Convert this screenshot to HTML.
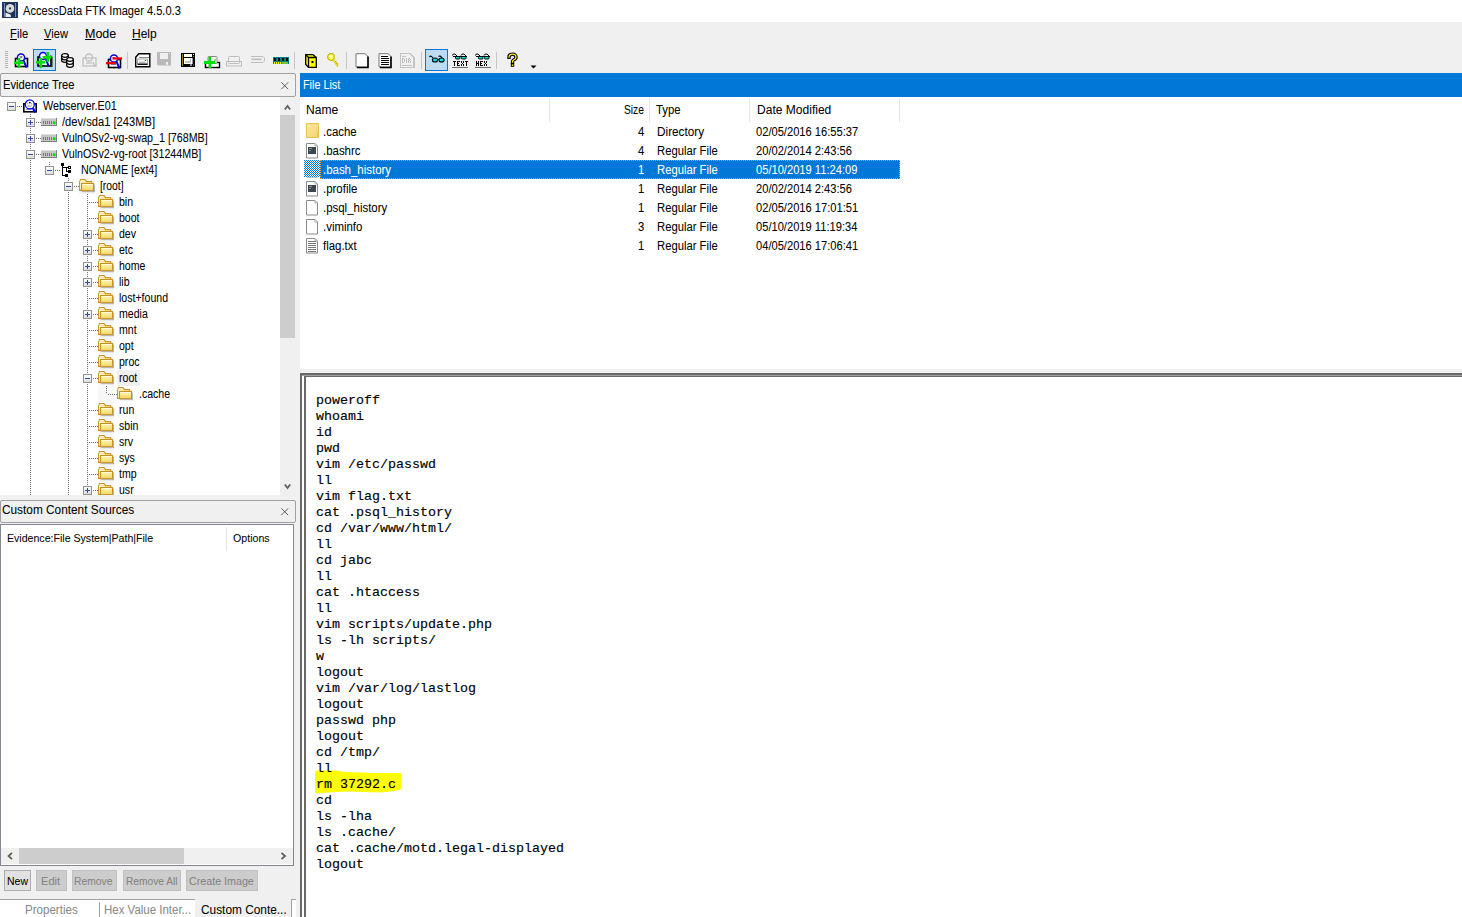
<!DOCTYPE html><html><head><meta charset="utf-8"><style>
*{margin:0;padding:0;box-sizing:border-box}
html,body{width:1462px;height:917px;overflow:hidden;background:#f0f0f0;font-family:"Liberation Sans",sans-serif;font-size:12px;color:#000;position:relative}
.a{position:absolute}
.t{position:absolute;white-space:pre;-webkit-text-stroke:0.05px currentColor}
.u{text-decoration:underline;text-underline-offset:1px}
svg{position:absolute;overflow:visible}
.mono{position:absolute;white-space:pre;font-family:"Liberation Mono",monospace;font-size:13.333px;line-height:16px;color:#000;-webkit-text-stroke:0.15px #000}
</style></head><body>
<div class="a" style="left:0px;top:0px;width:1462px;height:22px;background:#fff"></div>
<svg style="left:2px;top:2px" width="16" height="16" viewBox="0 0 16 16">
<rect x="0" y="0" width="16" height="16" fill="#1c3563"/>
<rect x="2" y="1" width="1" height="14" fill="#7d8db0"/>
<rect x="13" y="1" width="1" height="14" fill="#7d8db0"/>
<rect x="3" y="1" width="10" height="14" fill="#1a2f5e"/>
<circle cx="8" cy="6.4" r="4.3" fill="#dadada"/>
<circle cx="8" cy="6.4" r="1.1" fill="#1a2f5e"/>
<path d="M3.5 10.5 L8.5 12.5 L9 15 L3.5 15 Z" fill="#eeeeee"/>
</svg>
<div class="t" style="left:23.00px;top:2.67px;font-size:12.5px;line-height:16px;color:#000;transform:scaleX(0.8876);transform-origin:0 0;">AccessData FTK Imager 4.5.0.3</div>
<div class="t" style="left:10.00px;top:25.67px;font-size:12.5px;line-height:16px;color:#000;transform:scaleX(0.9000);transform-origin:0 0;"><span class="u">F</span>ile</div>
<div class="t" style="left:44.00px;top:25.67px;font-size:12.5px;line-height:16px;color:#000;transform:scaleX(0.8929);transform-origin:0 0;"><span class="u">V</span>iew</div>
<div class="t" style="left:85.00px;top:25.67px;font-size:12.5px;line-height:16px;color:#000;transform:scaleX(1.0000);transform-origin:0 0;"><span class="u">M</span>ode</div>
<div class="t" style="left:132.00px;top:25.67px;font-size:12.5px;line-height:16px;color:#000;transform:scaleX(0.9615);transform-origin:0 0;"><span class="u">H</span>elp</div>
<svg style="left:0;top:0" width="560" height="76" viewBox="0 0 560 76"><rect x="5" y="51" width="3" height="1" fill="#b4b4b4"/><rect x="5" y="53" width="3" height="1" fill="#b4b4b4"/><rect x="5" y="55" width="3" height="1" fill="#b4b4b4"/><rect x="5" y="57" width="3" height="1" fill="#b4b4b4"/><rect x="5" y="59" width="3" height="1" fill="#b4b4b4"/><rect x="5" y="61" width="3" height="1" fill="#b4b4b4"/><rect x="5" y="63" width="3" height="1" fill="#b4b4b4"/><rect x="5" y="65" width="3" height="1" fill="#b4b4b4"/><rect x="5" y="67" width="3" height="1" fill="#b4b4b4"/><rect x="33.5" y="49.5" width="22" height="21" fill="#bcdcf4" stroke="#0078d7" stroke-width="1"/><rect x="425.5" y="49.5" width="22" height="21" fill="#bcdcf4" stroke="#0078d7" stroke-width="1"/><rect x="127" y="52" width="1" height="17" fill="#c6c6c6"/><rect x="294" y="52" width="1" height="17" fill="#c6c6c6"/><rect x="346" y="52" width="1" height="17" fill="#c6c6c6"/><rect x="421" y="52" width="1" height="17" fill="#c6c6c6"/><rect x="496" y="52" width="1" height="17" fill="#c6c6c6"/><g transform="translate(14,52)"><rect x="1.5" y="6.5" width="12" height="8" fill="#fff" stroke="#000" stroke-width="1.6"/><rect x="4" y="11" width="5" height="1" fill="#888"/><circle cx="7" cy="5.5" r="3.6" fill="#fff" stroke="#0000e0" stroke-width="1.5"/><ellipse cx="7" cy="5" rx="1.5" ry="1" fill="#777"/><path d="M9.5 8.5 L12.5 15.5" stroke="#0000e0" stroke-width="2"/><rect x="0" y="9.5" width="10" height="2.6" fill="#00e000"/><rect x="3.7" y="6" width="2.6" height="10" fill="#00e000"/></g><g transform="translate(36,52)"><path d="M3 15 L17 15 L17 5 L15 3 L14 3 L14 15" fill="#7a7a7a"/><rect x="2" y="5" width="13" height="9" fill="#f3f3f3" stroke="#000" stroke-width="1.6"/><circle cx="7" cy="4" r="3.5" fill="#fff" stroke="#0000e0" stroke-width="1.5"/><path d="M10 7 L12.5 14" stroke="#0000e0" stroke-width="2"/><rect x="0" y="9" width="9" height="2.6" fill="#00e000"/><rect x="3.5" y="6" width="2.6" height="10" fill="#00e000"/><rect x="6.5" y="4" width="9" height="2.6" fill="#00e000"/><rect x="10.5" y="0" width="2.6" height="10" fill="#00e000"/></g><g transform="translate(61,53)" fill="#fff" stroke="#000" stroke-width="1.3"><path d="M0.7 2.5 v5 a3.3 1.8 0 0 0 6.6 0 v-5"/><ellipse cx="4" cy="2.5" rx="3.3" ry="1.8"/><path d="M0.7 5 a3.3 1.8 0 0 0 6.6 0" fill="none"/><path d="M5.7 6.5 v6 a3.3 1.8 0 0 0 6.6 0 v-6"/><ellipse cx="9" cy="6.5" rx="3.3" ry="1.8"/><path d="M5.7 9.5 a3.3 1.8 0 0 0 6.6 0" fill="none"/></g><g transform="translate(82,53)" fill="none" stroke="#c0c0c0" stroke-width="1.3"><rect x="1" y="5" width="13" height="8"/><circle cx="7" cy="4.5" r="3.5"/><path d="M4 10 h6"/><path d="M11 9 L13 14"/></g><g transform="translate(107,53)"><rect x="1.5" y="6.5" width="12" height="8" fill="#fff" stroke="#000" stroke-width="1.6"/><rect x="4" y="11" width="5" height="1" fill="#888"/><circle cx="7" cy="5.5" r="3.6" fill="#fff" stroke="#0000e0" stroke-width="1.5"/><ellipse cx="7" cy="5" rx="1.5" ry="1" fill="#777"/><path d="M9.5 8.5 L12.5 15.5" stroke="#0000e0" stroke-width="2"/><rect x="-1" y="9" width="10" height="2.3" fill="#f00000"/><rect x="5.5" y="4.3" width="9.5" height="2.3" fill="#f00000"/></g><g transform="translate(135,53)"><path d="M0.7 4.3 L3.8 0.7 L14.8 0.7 L14.8 13.8 L0.7 13.8 Z" fill="#fff" stroke="#000" stroke-width="1.4"/><path d="M4 4.5 H14" stroke="#8a8a8a" stroke-width="1"/><path d="M2.5 6 h10 v5 h-10 z" fill="#fff" stroke="#9a9a9a" stroke-width="0.9"/><rect x="2.5" y="10.6" width="10.2" height="1.3" fill="#000"/><rect x="4" y="8.7" width="6.5" height="0.9" fill="#8a8a8a"/><circle cx="10.5" cy="7.4" r="0.7" fill="#008000"/></g><g transform="translate(157,52)"><path d="M0 0 H14 V13.6 H1 L0 12.6 Z" fill="#b9b9b9"/><rect x="3" y="1" width="8" height="6" fill="#f0f0f0"/><rect x="9" y="10" width="2" height="2.7" fill="#f0f0f0"/><rect x="12" y="1" width="1" height="1" fill="#f0f0f0"/></g><g transform="translate(181,53)"><rect x="0" y="0" width="14" height="14" fill="#000"/><rect x="1" y="1" width="1" height="12" fill="#9a8a00"/><rect x="3" y="1" width="8" height="3" fill="#fff"/><rect x="3" y="5" width="9" height="6" fill="#fff"/><rect x="4" y="8.5" width="6" height="1" fill="#888"/><rect x="11" y="5" width="1" height="6" fill="#999"/><circle cx="9.5" cy="7" r="0.6" fill="#080"/><rect x="9" y="11.5" width="2" height="1" fill="#fff"/><rect x="12" y="1" width="1" height="1" fill="#fff"/><rect x="12" y="3" width="1" height="1" fill="#9a8a00"/><rect x="12" y="11.5" width="1" height="1" fill="#9a8a00"/></g><g transform="translate(204,55)"><rect x="1.5" y="7.5" width="14" height="5" fill="#fff" stroke="#000" stroke-width="1.4"/><rect x="4" y="1.5" width="9" height="7" rx="0.8" fill="#fff" stroke="#888" stroke-width="1"/><circle cx="11" cy="5" r="0.7" fill="#080"/><rect x="0" y="6" width="11" height="3" fill="#00e000"/><rect x="4.5" y="2" width="2.5" height="11" fill="#00e000"/></g><g transform="translate(226,56)" fill="none" stroke="#bdbdbd" stroke-width="1"><rect x="0.5" y="5.5" width="15" height="4.5"/><rect x="2.5" y="0.5" width="11" height="7" rx="1"/><path d="M4 5.5 h6"/></g><g transform="translate(250,56)" fill="none" stroke="#bdbdbd" stroke-width="1"><path d="M1 0.5 h12 l1.5 1.5 v3 l-1.5 1.5 h-12"/><rect x="1.5" y="2.5" width="10" height="1.6" fill="#bdbdbd" stroke="none"/></g><g transform="translate(273,57)"><rect x="0" y="0" width="16" height="7" fill="#008080"/><rect x="1" y="1" width="2" height="3" fill="#000"/><rect x="5" y="1" width="2" height="3" fill="#000"/><rect x="9" y="1" width="2" height="3" fill="#000"/><rect x="13" y="1" width="2" height="3" fill="#000"/><path d="M1.5 5v2M3.5 5v2M5.5 5v2M7.5 5v2M10 5v2M12 5v2M14 5v2" stroke="#ffff00" stroke-width="1"/></g><g transform="translate(305,54)"><path d="M0.7 0.7 L8 0.7 L11.3 3.5 L11.3 13.3 L3.5 13.3 L0.7 10.5 Z" fill="#ffff00" stroke="#000" stroke-width="1.3"/><path d="M0.7 0.7 L3.5 3.5 L11.3 3.5 M3.5 3.5 L3.5 13.3" fill="none" stroke="#000" stroke-width="1.3"/><rect x="6.5" y="7" width="2" height="2" fill="#000"/></g><g transform="translate(327,53)"><circle cx="4" cy="4" r="3.3" fill="#ffff60" stroke="#c8b400" stroke-width="1.2"/><circle cx="3.5" cy="3.3" r="1" fill="#fff"/><path d="M6 6.5 L11 13.5 M8 9.5 L9.5 8.5 M9.5 11.5 L11 10.5" stroke="#c8b400" stroke-width="1.6"/><path d="M6 6.5 L11 13.5" stroke="#ffff40" stroke-width="0.8"/></g><g transform="translate(355,53)"><path d="M1 0.7 L10 0.7 L13 3.5 L13 14 L1 14 Z" fill="#fff" stroke="#777" stroke-width="1"/><path d="M13 3.5 V14.5 H2" fill="none" stroke="#000" stroke-width="1.6"/></g><g transform="translate(378,53)"><path d="M1 0.7 L10 0.7 L13 3.5 L13 14 L1 14 Z" fill="#fff" stroke="#777" stroke-width="1"/><path d="M13 3.5 V14.5 H2" fill="none" stroke="#000" stroke-width="1.6"/><path d="M3 3.5h7M3 5.5h8M3 7.5h8M3 9.5h8M3 11.5h8" stroke="#000" stroke-width="1"/></g><g transform="translate(400,53)" shape-rendering="crispEdges"><path d="M0.5 0.5 H10 L13.5 4 V14.5 H0.5 Z" fill="none" stroke="#c4c4c4" stroke-width="1"/><rect x="14" y="4" width="1" height="11" fill="#c4c4c4"/><rect x="2" y="3" width="4" height="1" fill="#c4c4c4"/><rect x="2" y="12" width="10" height="1" fill="#c4c4c4"/><rect x="2" y="5" width="1" height="1" fill="#c0c0c0"/><rect x="3" y="5" width="1" height="1" fill="#c0c0c0"/><rect x="2" y="6" width="1" height="1" fill="#c0c0c0"/><rect x="4" y="6" width="1" height="1" fill="#c0c0c0"/><rect x="2" y="7" width="1" height="1" fill="#c0c0c0"/><rect x="4" y="7" width="1" height="1" fill="#c0c0c0"/><rect x="2" y="8" width="1" height="1" fill="#c0c0c0"/><rect x="4" y="8" width="1" height="1" fill="#c0c0c0"/><rect x="2" y="9" width="1" height="1" fill="#c0c0c0"/><rect x="3" y="9" width="1" height="1" fill="#c0c0c0"/><rect x="6" y="5" width="1" height="1" fill="#c0c0c0"/><rect x="6" y="6" width="1" height="1" fill="#c0c0c0"/><rect x="6" y="7" width="1" height="1" fill="#c0c0c0"/><rect x="6" y="8" width="1" height="1" fill="#c0c0c0"/><rect x="6" y="9" width="1" height="1" fill="#c0c0c0"/><rect x="8" y="5" width="1" height="1" fill="#c0c0c0"/><rect x="9" y="5" width="1" height="1" fill="#c0c0c0"/><rect x="8" y="6" width="1" height="1" fill="#c0c0c0"/><rect x="10" y="6" width="1" height="1" fill="#c0c0c0"/><rect x="8" y="7" width="1" height="1" fill="#c0c0c0"/><rect x="9" y="7" width="1" height="1" fill="#c0c0c0"/><rect x="8" y="8" width="1" height="1" fill="#c0c0c0"/><rect x="10" y="8" width="1" height="1" fill="#c0c0c0"/><rect x="8" y="9" width="1" height="1" fill="#c0c0c0"/><rect x="10" y="9" width="1" height="1" fill="#c0c0c0"/></g><g transform="translate(429,55)"><path d="M0.5 2 Q2 0 4 3" fill="none" stroke="#000" stroke-width="1.2"/><path d="M9.5 1.5 Q11 0 13 3" fill="none" stroke="#000" stroke-width="1.2"/><ellipse cx="6" cy="5" rx="2.6" ry="2" fill="#00e0e0" stroke="#000" stroke-width="1.1"/><ellipse cx="12.5" cy="5" rx="2.6" ry="2" fill="#00e0e0" stroke="#000" stroke-width="1.1"/><path d="M8.4 4.5 h1.8" stroke="#000" stroke-width="1.2"/></g><g transform="translate(452,53)"><path d="M0.5 2.5 Q0.5 0.5 3 1 L5 3" fill="none" stroke="#000" stroke-width="1"/><path d="M9 2.5 Q9.5 0.5 12 1 L14 3" fill="none" stroke="#000" stroke-width="1"/><rect x="3.5" y="3.5" width="4.5" height="2.5" rx="1" fill="#00e0e0" stroke="#000" stroke-width="1"/><rect x="9.5" y="3.5" width="4.5" height="2.5" rx="1" fill="#00e0e0" stroke="#000" stroke-width="1"/><path d="M1 3.5 h14" stroke="#000" stroke-width="1"/><g shape-rendering="crispEdges"><rect x="1" y="8" width="1" height="1" fill="#000"/><rect x="2" y="8" width="1" height="1" fill="#000"/><rect x="3" y="8" width="1" height="1" fill="#000"/><rect x="2" y="9" width="1" height="1" fill="#000"/><rect x="2" y="10" width="1" height="1" fill="#000"/><rect x="2" y="11" width="1" height="1" fill="#000"/><rect x="2" y="12" width="1" height="1" fill="#000"/><rect x="5" y="8" width="1" height="1" fill="#000"/><rect x="6" y="8" width="1" height="1" fill="#000"/><rect x="7" y="8" width="1" height="1" fill="#000"/><rect x="5" y="9" width="1" height="1" fill="#000"/><rect x="5" y="10" width="1" height="1" fill="#000"/><rect x="6" y="10" width="1" height="1" fill="#000"/><rect x="5" y="11" width="1" height="1" fill="#000"/><rect x="5" y="12" width="1" height="1" fill="#000"/><rect x="6" y="12" width="1" height="1" fill="#000"/><rect x="7" y="12" width="1" height="1" fill="#000"/><rect x="9" y="8" width="1" height="1" fill="#000"/><rect x="11" y="8" width="1" height="1" fill="#000"/><rect x="9" y="9" width="1" height="1" fill="#000"/><rect x="11" y="9" width="1" height="1" fill="#000"/><rect x="10" y="10" width="1" height="1" fill="#000"/><rect x="9" y="11" width="1" height="1" fill="#000"/><rect x="11" y="11" width="1" height="1" fill="#000"/><rect x="9" y="12" width="1" height="1" fill="#000"/><rect x="11" y="12" width="1" height="1" fill="#000"/><rect x="13" y="8" width="1" height="1" fill="#000"/><rect x="14" y="8" width="1" height="1" fill="#000"/><rect x="15" y="8" width="1" height="1" fill="#000"/><rect x="14" y="9" width="1" height="1" fill="#000"/><rect x="14" y="10" width="1" height="1" fill="#000"/><rect x="14" y="11" width="1" height="1" fill="#000"/><rect x="14" y="12" width="1" height="1" fill="#000"/></g><rect x="0" y="14" width="16" height="1" fill="#6a6a6a"/></g><g transform="translate(475,53)"><path d="M0.5 2.5 Q0.5 0.5 3 1 L5 3" fill="none" stroke="#000" stroke-width="1"/><path d="M9 2.5 Q9.5 0.5 12 1 L14 3" fill="none" stroke="#000" stroke-width="1"/><rect x="3.5" y="3.5" width="4.5" height="2.5" rx="1" fill="#00e0e0" stroke="#000" stroke-width="1"/><rect x="9.5" y="3.5" width="4.5" height="2.5" rx="1" fill="#00e0e0" stroke="#000" stroke-width="1"/><path d="M1 3.5 h14" stroke="#000" stroke-width="1"/><g shape-rendering="crispEdges"><rect x="1" y="8" width="1" height="1" fill="#000"/><rect x="3" y="8" width="1" height="1" fill="#000"/><rect x="1" y="9" width="1" height="1" fill="#000"/><rect x="3" y="9" width="1" height="1" fill="#000"/><rect x="1" y="10" width="1" height="1" fill="#000"/><rect x="2" y="10" width="1" height="1" fill="#000"/><rect x="3" y="10" width="1" height="1" fill="#000"/><rect x="1" y="11" width="1" height="1" fill="#000"/><rect x="3" y="11" width="1" height="1" fill="#000"/><rect x="1" y="12" width="1" height="1" fill="#000"/><rect x="3" y="12" width="1" height="1" fill="#000"/><rect x="5" y="8" width="1" height="1" fill="#000"/><rect x="6" y="8" width="1" height="1" fill="#000"/><rect x="7" y="8" width="1" height="1" fill="#000"/><rect x="5" y="9" width="1" height="1" fill="#000"/><rect x="5" y="10" width="1" height="1" fill="#000"/><rect x="6" y="10" width="1" height="1" fill="#000"/><rect x="5" y="11" width="1" height="1" fill="#000"/><rect x="5" y="12" width="1" height="1" fill="#000"/><rect x="6" y="12" width="1" height="1" fill="#000"/><rect x="7" y="12" width="1" height="1" fill="#000"/><rect x="9" y="8" width="1" height="1" fill="#000"/><rect x="11" y="8" width="1" height="1" fill="#000"/><rect x="9" y="9" width="1" height="1" fill="#000"/><rect x="11" y="9" width="1" height="1" fill="#000"/><rect x="10" y="10" width="1" height="1" fill="#000"/><rect x="9" y="11" width="1" height="1" fill="#000"/><rect x="11" y="11" width="1" height="1" fill="#000"/><rect x="9" y="12" width="1" height="1" fill="#000"/><rect x="11" y="12" width="1" height="1" fill="#000"/></g><rect x="0" y="14" width="16" height="1" fill="#6a6a6a"/></g><g transform="translate(507,53)" fill="none" stroke-linecap="square"><path d="M2 4.2 Q2 1.2 5.5 1.2 Q9 1.2 9 4.2 Q9 6 6.5 7 Q5.5 7.5 5.5 9.2" stroke="#000" stroke-width="3.4"/><path d="M2 4.2 Q2 1.2 5.5 1.2 Q9 1.2 9 4.2 Q9 6 6.5 7 Q5.5 7.5 5.5 9.2" stroke="#ffff00" stroke-width="1.3"/><rect x="3.8" y="10.6" width="3.4" height="3.2" fill="#000" stroke="none"/><rect x="4.8" y="11.4" width="1.5" height="1.5" fill="#ffff00" stroke="none"/></g><path d="M530.5 65.5 h6 l-3 3 z" fill="#000"/></svg>
<div class="a" style="left:0px;top:73px;width:296px;height:24px;border:1px solid #a0a0a0;border-radius:2px;background:#f0f0f0"></div>
<div class="t" style="left:2.50px;top:76.67px;font-size:12.5px;line-height:16px;color:#000;transform:scaleX(0.8950);transform-origin:0 0;">Evidence Tree</div>
<svg style="left:281px;top:82px" width="8" height="8" viewBox="0 0 8 8"><path d="M0.3 0.3 L7.2 7.2 M7.2 0.3 L0.3 7.2" stroke="#505050" stroke-width="0.9"/></svg>
<div class="a" style="left:0;top:97px;width:280px;height:398px;background:#fff;overflow:hidden"><svg style="left:0;top:-97px" width="280" height="495" viewBox="0 0 280 495" shape-rendering="crispEdges"><defs><linearGradient id="fg" x1="0" y1="0" x2="0" y2="1"><stop offset="0" stop-color="#fff6c0"/><stop offset="1" stop-color="#f6d55a"/></linearGradient><linearGradient id="eg" x1="0" y1="0" x2="0" y2="1"><stop offset="0" stop-color="#ffffff"/><stop offset="1" stop-color="#dcdcdc"/></linearGradient></defs><rect x="98" y="194" width="16" height="301" fill="#f7f7f7"/><rect x="79" y="178" width="16" height="16" fill="#f5f5f5"/><path d="M30.5 114 V495" stroke="#6d6d6d" stroke-width="1" stroke-dasharray="1 1"/><path d="M49.5 162 V166" stroke="#6d6d6d" stroke-width="1" stroke-dasharray="1 1"/><path d="M68.5 178 V182" stroke="#6d6d6d" stroke-width="1" stroke-dasharray="1 1"/><path d="M68.5 190 V495" stroke="#6d6d6d" stroke-width="1" stroke-dasharray="1 1"/><path d="M87.5 194 V495" stroke="#6d6d6d" stroke-width="1" stroke-dasharray="1 1"/><path d="M106.5 386 V394" stroke="#6d6d6d" stroke-width="1" stroke-dasharray="1 1"/><rect x="17" y="106" width="1" height="1" fill="#6d6d6d"/><rect x="19" y="106" width="1" height="1" fill="#6d6d6d"/><rect x="21" y="106" width="1" height="1" fill="#6d6d6d"/><rect x="36" y="122" width="1" height="1" fill="#6d6d6d"/><rect x="38" y="122" width="1" height="1" fill="#6d6d6d"/><rect x="40" y="122" width="1" height="1" fill="#6d6d6d"/><rect x="36" y="138" width="1" height="1" fill="#6d6d6d"/><rect x="38" y="138" width="1" height="1" fill="#6d6d6d"/><rect x="40" y="138" width="1" height="1" fill="#6d6d6d"/><rect x="36" y="154" width="1" height="1" fill="#6d6d6d"/><rect x="38" y="154" width="1" height="1" fill="#6d6d6d"/><rect x="40" y="154" width="1" height="1" fill="#6d6d6d"/><rect x="55" y="170" width="1" height="1" fill="#6d6d6d"/><rect x="57" y="170" width="1" height="1" fill="#6d6d6d"/><rect x="59" y="170" width="1" height="1" fill="#6d6d6d"/><rect x="74" y="186" width="1" height="1" fill="#6d6d6d"/><rect x="76" y="186" width="1" height="1" fill="#6d6d6d"/><rect x="78" y="186" width="1" height="1" fill="#6d6d6d"/><rect x="89" y="202" width="1" height="1" fill="#6d6d6d"/><rect x="91" y="202" width="1" height="1" fill="#6d6d6d"/><rect x="93" y="202" width="1" height="1" fill="#6d6d6d"/><rect x="95" y="202" width="1" height="1" fill="#6d6d6d"/><rect x="97" y="202" width="1" height="1" fill="#6d6d6d"/><rect x="89" y="218" width="1" height="1" fill="#6d6d6d"/><rect x="91" y="218" width="1" height="1" fill="#6d6d6d"/><rect x="93" y="218" width="1" height="1" fill="#6d6d6d"/><rect x="95" y="218" width="1" height="1" fill="#6d6d6d"/><rect x="97" y="218" width="1" height="1" fill="#6d6d6d"/><rect x="93" y="234" width="1" height="1" fill="#6d6d6d"/><rect x="95" y="234" width="1" height="1" fill="#6d6d6d"/><rect x="97" y="234" width="1" height="1" fill="#6d6d6d"/><rect x="93" y="250" width="1" height="1" fill="#6d6d6d"/><rect x="95" y="250" width="1" height="1" fill="#6d6d6d"/><rect x="97" y="250" width="1" height="1" fill="#6d6d6d"/><rect x="93" y="266" width="1" height="1" fill="#6d6d6d"/><rect x="95" y="266" width="1" height="1" fill="#6d6d6d"/><rect x="97" y="266" width="1" height="1" fill="#6d6d6d"/><rect x="93" y="282" width="1" height="1" fill="#6d6d6d"/><rect x="95" y="282" width="1" height="1" fill="#6d6d6d"/><rect x="97" y="282" width="1" height="1" fill="#6d6d6d"/><rect x="89" y="298" width="1" height="1" fill="#6d6d6d"/><rect x="91" y="298" width="1" height="1" fill="#6d6d6d"/><rect x="93" y="298" width="1" height="1" fill="#6d6d6d"/><rect x="95" y="298" width="1" height="1" fill="#6d6d6d"/><rect x="97" y="298" width="1" height="1" fill="#6d6d6d"/><rect x="93" y="314" width="1" height="1" fill="#6d6d6d"/><rect x="95" y="314" width="1" height="1" fill="#6d6d6d"/><rect x="97" y="314" width="1" height="1" fill="#6d6d6d"/><rect x="89" y="330" width="1" height="1" fill="#6d6d6d"/><rect x="91" y="330" width="1" height="1" fill="#6d6d6d"/><rect x="93" y="330" width="1" height="1" fill="#6d6d6d"/><rect x="95" y="330" width="1" height="1" fill="#6d6d6d"/><rect x="97" y="330" width="1" height="1" fill="#6d6d6d"/><rect x="89" y="346" width="1" height="1" fill="#6d6d6d"/><rect x="91" y="346" width="1" height="1" fill="#6d6d6d"/><rect x="93" y="346" width="1" height="1" fill="#6d6d6d"/><rect x="95" y="346" width="1" height="1" fill="#6d6d6d"/><rect x="97" y="346" width="1" height="1" fill="#6d6d6d"/><rect x="89" y="362" width="1" height="1" fill="#6d6d6d"/><rect x="91" y="362" width="1" height="1" fill="#6d6d6d"/><rect x="93" y="362" width="1" height="1" fill="#6d6d6d"/><rect x="95" y="362" width="1" height="1" fill="#6d6d6d"/><rect x="97" y="362" width="1" height="1" fill="#6d6d6d"/><rect x="93" y="378" width="1" height="1" fill="#6d6d6d"/><rect x="95" y="378" width="1" height="1" fill="#6d6d6d"/><rect x="97" y="378" width="1" height="1" fill="#6d6d6d"/><rect x="108" y="394" width="1" height="1" fill="#6d6d6d"/><rect x="110" y="394" width="1" height="1" fill="#6d6d6d"/><rect x="112" y="394" width="1" height="1" fill="#6d6d6d"/><rect x="114" y="394" width="1" height="1" fill="#6d6d6d"/><rect x="116" y="394" width="1" height="1" fill="#6d6d6d"/><rect x="89" y="410" width="1" height="1" fill="#6d6d6d"/><rect x="91" y="410" width="1" height="1" fill="#6d6d6d"/><rect x="93" y="410" width="1" height="1" fill="#6d6d6d"/><rect x="95" y="410" width="1" height="1" fill="#6d6d6d"/><rect x="97" y="410" width="1" height="1" fill="#6d6d6d"/><rect x="89" y="426" width="1" height="1" fill="#6d6d6d"/><rect x="91" y="426" width="1" height="1" fill="#6d6d6d"/><rect x="93" y="426" width="1" height="1" fill="#6d6d6d"/><rect x="95" y="426" width="1" height="1" fill="#6d6d6d"/><rect x="97" y="426" width="1" height="1" fill="#6d6d6d"/><rect x="89" y="442" width="1" height="1" fill="#6d6d6d"/><rect x="91" y="442" width="1" height="1" fill="#6d6d6d"/><rect x="93" y="442" width="1" height="1" fill="#6d6d6d"/><rect x="95" y="442" width="1" height="1" fill="#6d6d6d"/><rect x="97" y="442" width="1" height="1" fill="#6d6d6d"/><rect x="89" y="458" width="1" height="1" fill="#6d6d6d"/><rect x="91" y="458" width="1" height="1" fill="#6d6d6d"/><rect x="93" y="458" width="1" height="1" fill="#6d6d6d"/><rect x="95" y="458" width="1" height="1" fill="#6d6d6d"/><rect x="97" y="458" width="1" height="1" fill="#6d6d6d"/><rect x="89" y="474" width="1" height="1" fill="#6d6d6d"/><rect x="91" y="474" width="1" height="1" fill="#6d6d6d"/><rect x="93" y="474" width="1" height="1" fill="#6d6d6d"/><rect x="95" y="474" width="1" height="1" fill="#6d6d6d"/><rect x="97" y="474" width="1" height="1" fill="#6d6d6d"/><rect x="93" y="490" width="1" height="1" fill="#6d6d6d"/><rect x="95" y="490" width="1" height="1" fill="#6d6d6d"/><rect x="97" y="490" width="1" height="1" fill="#6d6d6d"/><rect x="7.5" y="102.5" width="8" height="8" rx="1" fill="url(#eg)" stroke="#929292" stroke-width="1"/><rect x="9" y="106" width="5" height="1" fill="#2b4ea0"/><rect x="26.5" y="118.5" width="8" height="8" rx="1" fill="url(#eg)" stroke="#929292" stroke-width="1"/><rect x="28" y="122" width="5" height="1" fill="#2b4ea0"/><rect x="30" y="120" width="1" height="5" fill="#2b4ea0"/><rect x="26.5" y="134.5" width="8" height="8" rx="1" fill="url(#eg)" stroke="#929292" stroke-width="1"/><rect x="28" y="138" width="5" height="1" fill="#2b4ea0"/><rect x="30" y="136" width="1" height="5" fill="#2b4ea0"/><rect x="26.5" y="150.5" width="8" height="8" rx="1" fill="url(#eg)" stroke="#929292" stroke-width="1"/><rect x="28" y="154" width="5" height="1" fill="#2b4ea0"/><rect x="45.5" y="166.5" width="8" height="8" rx="1" fill="url(#eg)" stroke="#929292" stroke-width="1"/><rect x="47" y="170" width="5" height="1" fill="#2b4ea0"/><rect x="64.5" y="182.5" width="8" height="8" rx="1" fill="url(#eg)" stroke="#929292" stroke-width="1"/><rect x="66" y="186" width="5" height="1" fill="#2b4ea0"/><rect x="83.5" y="230.5" width="8" height="8" rx="1" fill="url(#eg)" stroke="#929292" stroke-width="1"/><rect x="85" y="234" width="5" height="1" fill="#2b4ea0"/><rect x="87" y="232" width="1" height="5" fill="#2b4ea0"/><rect x="83.5" y="246.5" width="8" height="8" rx="1" fill="url(#eg)" stroke="#929292" stroke-width="1"/><rect x="85" y="250" width="5" height="1" fill="#2b4ea0"/><rect x="87" y="248" width="1" height="5" fill="#2b4ea0"/><rect x="83.5" y="262.5" width="8" height="8" rx="1" fill="url(#eg)" stroke="#929292" stroke-width="1"/><rect x="85" y="266" width="5" height="1" fill="#2b4ea0"/><rect x="87" y="264" width="1" height="5" fill="#2b4ea0"/><rect x="83.5" y="278.5" width="8" height="8" rx="1" fill="url(#eg)" stroke="#929292" stroke-width="1"/><rect x="85" y="282" width="5" height="1" fill="#2b4ea0"/><rect x="87" y="280" width="1" height="5" fill="#2b4ea0"/><rect x="83.5" y="310.5" width="8" height="8" rx="1" fill="url(#eg)" stroke="#929292" stroke-width="1"/><rect x="85" y="314" width="5" height="1" fill="#2b4ea0"/><rect x="87" y="312" width="1" height="5" fill="#2b4ea0"/><rect x="83.5" y="374.5" width="8" height="8" rx="1" fill="url(#eg)" stroke="#929292" stroke-width="1"/><rect x="85" y="378" width="5" height="1" fill="#2b4ea0"/><rect x="83.5" y="486.5" width="8" height="8" rx="1" fill="url(#eg)" stroke="#929292" stroke-width="1"/><rect x="85" y="490" width="5" height="1" fill="#2b4ea0"/><rect x="87" y="488" width="1" height="5" fill="#2b4ea0"/></svg><svg style="left:0;top:-97px" width="280" height="495" viewBox="0 0 280 495"><g transform="translate(23,97)"><rect x="0.8" y="6.8" width="12.4" height="8" fill="#fff" stroke="#000" stroke-width="1.6"/><rect x="2.5" y="12" width="6" height="0.9" fill="#999"/><circle cx="6.8" cy="7.4" r="4.5" fill="#fff" stroke="#0000ee" stroke-width="1.3"/><circle cx="6.8" cy="5.6" r="0.9" fill="#000"/><path d="M4 6.8 h1 M8 6.8 h1 M4.5 9 h4" stroke="#777" stroke-width="0.9"/><path d="M9.8 11 L12.3 15.5" stroke="#0000ee" stroke-width="2.3"/></g><g transform="translate(41,118)"><rect x="0" y="0" width="16" height="8" fill="#c4c4c4"/><rect x="0" y="0" width="16" height="1" fill="#dedede"/><rect x="0" y="7" width="16" height="1" fill="#808080"/><rect x="15" y="0" width="1" height="8" fill="#808080"/><path d="M2.5 3v3M4.5 3v3M6.5 3v3M8.5 3v3M10.5 3v3" stroke="#7a7a7a" stroke-width="1"/><rect x="12" y="3.5" width="2.5" height="2.5" fill="#00e000"/></g><g transform="translate(41,134)"><rect x="0" y="0" width="16" height="8" fill="#c4c4c4"/><rect x="0" y="0" width="16" height="1" fill="#dedede"/><rect x="0" y="7" width="16" height="1" fill="#808080"/><rect x="15" y="0" width="1" height="8" fill="#808080"/><path d="M2.5 3v3M4.5 3v3M6.5 3v3M8.5 3v3M10.5 3v3" stroke="#7a7a7a" stroke-width="1"/><rect x="12" y="3.5" width="2.5" height="2.5" fill="#00e000"/></g><g transform="translate(41,150)"><rect x="0" y="0" width="16" height="8" fill="#c4c4c4"/><rect x="0" y="0" width="16" height="1" fill="#dedede"/><rect x="0" y="7" width="16" height="1" fill="#808080"/><rect x="15" y="0" width="1" height="8" fill="#808080"/><path d="M2.5 3v3M4.5 3v3M6.5 3v3M8.5 3v3M10.5 3v3" stroke="#7a7a7a" stroke-width="1"/><rect x="12" y="3.5" width="2.5" height="2.5" fill="#00e000"/></g><g fill="#000" shape-rendering="crispEdges"><rect x="61" y="163" width="3" height="3"/><rect x="62" y="166" width="1" height="10"/><rect x="62" y="167" width="6" height="1"/><rect x="68" y="166" width="3" height="3"/><rect x="69" y="167" width="1" height="1" fill="#fff"/><rect x="66" y="167" width="1" height="5"/><rect x="66" y="171" width="2" height="1"/><rect x="68" y="170" width="3" height="3"/><rect x="62" y="175" width="3" height="1"/><rect x="65" y="174" width="3" height="3"/></g><g transform="translate(79,179)"><path d="M0.6 3 L1.6 0.6 H6 L7.5 2.6 H12.4 L13 4 V11.4 H0.6 Z" fill="#fff3a0" stroke="#c8922a" stroke-width="1.1"/><path d="M1.6 1.6 H5.6 M1.6 2.2 V10" stroke="#ffffff" stroke-width="0.8" opacity="0.8"/><rect x="2.5" y="4.5" width="12" height="7.2" fill="url(#fg)" stroke="#c8922a" stroke-width="1.1"/><path d="M3.4 5.5 H13.6" stroke="#fffde0" stroke-width="0.9"/><rect x="15" y="5.5" width="1" height="7" fill="#6a6a70" opacity="0.45"/><rect x="3" y="12.2" width="13" height="1" fill="#6a6a70" opacity="0.45"/></g><g transform="translate(98,195)"><path d="M0.6 3 L1.6 0.6 H6 L7.5 2.6 H12.4 L13 4 V11.4 H0.6 Z" fill="#fff3a0" stroke="#c8922a" stroke-width="1.1"/><path d="M1.6 1.6 H5.6 M1.6 2.2 V10" stroke="#ffffff" stroke-width="0.8" opacity="0.8"/><rect x="2.5" y="4.5" width="12" height="7.2" fill="url(#fg)" stroke="#c8922a" stroke-width="1.1"/><path d="M3.4 5.5 H13.6" stroke="#fffde0" stroke-width="0.9"/><rect x="15" y="5.5" width="1" height="7" fill="#6a6a70" opacity="0.45"/><rect x="3" y="12.2" width="13" height="1" fill="#6a6a70" opacity="0.45"/></g><g transform="translate(98,211)"><path d="M0.6 3 L1.6 0.6 H6 L7.5 2.6 H12.4 L13 4 V11.4 H0.6 Z" fill="#fff3a0" stroke="#c8922a" stroke-width="1.1"/><path d="M1.6 1.6 H5.6 M1.6 2.2 V10" stroke="#ffffff" stroke-width="0.8" opacity="0.8"/><rect x="2.5" y="4.5" width="12" height="7.2" fill="url(#fg)" stroke="#c8922a" stroke-width="1.1"/><path d="M3.4 5.5 H13.6" stroke="#fffde0" stroke-width="0.9"/><rect x="15" y="5.5" width="1" height="7" fill="#6a6a70" opacity="0.45"/><rect x="3" y="12.2" width="13" height="1" fill="#6a6a70" opacity="0.45"/></g><g transform="translate(98,227)"><path d="M0.6 3 L1.6 0.6 H6 L7.5 2.6 H12.4 L13 4 V11.4 H0.6 Z" fill="#fff3a0" stroke="#c8922a" stroke-width="1.1"/><path d="M1.6 1.6 H5.6 M1.6 2.2 V10" stroke="#ffffff" stroke-width="0.8" opacity="0.8"/><rect x="2.5" y="4.5" width="12" height="7.2" fill="url(#fg)" stroke="#c8922a" stroke-width="1.1"/><path d="M3.4 5.5 H13.6" stroke="#fffde0" stroke-width="0.9"/><rect x="15" y="5.5" width="1" height="7" fill="#6a6a70" opacity="0.45"/><rect x="3" y="12.2" width="13" height="1" fill="#6a6a70" opacity="0.45"/></g><g transform="translate(98,243)"><path d="M0.6 3 L1.6 0.6 H6 L7.5 2.6 H12.4 L13 4 V11.4 H0.6 Z" fill="#fff3a0" stroke="#c8922a" stroke-width="1.1"/><path d="M1.6 1.6 H5.6 M1.6 2.2 V10" stroke="#ffffff" stroke-width="0.8" opacity="0.8"/><rect x="2.5" y="4.5" width="12" height="7.2" fill="url(#fg)" stroke="#c8922a" stroke-width="1.1"/><path d="M3.4 5.5 H13.6" stroke="#fffde0" stroke-width="0.9"/><rect x="15" y="5.5" width="1" height="7" fill="#6a6a70" opacity="0.45"/><rect x="3" y="12.2" width="13" height="1" fill="#6a6a70" opacity="0.45"/></g><g transform="translate(98,259)"><path d="M0.6 3 L1.6 0.6 H6 L7.5 2.6 H12.4 L13 4 V11.4 H0.6 Z" fill="#fff3a0" stroke="#c8922a" stroke-width="1.1"/><path d="M1.6 1.6 H5.6 M1.6 2.2 V10" stroke="#ffffff" stroke-width="0.8" opacity="0.8"/><rect x="2.5" y="4.5" width="12" height="7.2" fill="url(#fg)" stroke="#c8922a" stroke-width="1.1"/><path d="M3.4 5.5 H13.6" stroke="#fffde0" stroke-width="0.9"/><rect x="15" y="5.5" width="1" height="7" fill="#6a6a70" opacity="0.45"/><rect x="3" y="12.2" width="13" height="1" fill="#6a6a70" opacity="0.45"/></g><g transform="translate(98,275)"><path d="M0.6 3 L1.6 0.6 H6 L7.5 2.6 H12.4 L13 4 V11.4 H0.6 Z" fill="#fff3a0" stroke="#c8922a" stroke-width="1.1"/><path d="M1.6 1.6 H5.6 M1.6 2.2 V10" stroke="#ffffff" stroke-width="0.8" opacity="0.8"/><rect x="2.5" y="4.5" width="12" height="7.2" fill="url(#fg)" stroke="#c8922a" stroke-width="1.1"/><path d="M3.4 5.5 H13.6" stroke="#fffde0" stroke-width="0.9"/><rect x="15" y="5.5" width="1" height="7" fill="#6a6a70" opacity="0.45"/><rect x="3" y="12.2" width="13" height="1" fill="#6a6a70" opacity="0.45"/></g><g transform="translate(98,291)"><path d="M0.6 3 L1.6 0.6 H6 L7.5 2.6 H12.4 L13 4 V11.4 H0.6 Z" fill="#fff3a0" stroke="#c8922a" stroke-width="1.1"/><path d="M1.6 1.6 H5.6 M1.6 2.2 V10" stroke="#ffffff" stroke-width="0.8" opacity="0.8"/><rect x="2.5" y="4.5" width="12" height="7.2" fill="url(#fg)" stroke="#c8922a" stroke-width="1.1"/><path d="M3.4 5.5 H13.6" stroke="#fffde0" stroke-width="0.9"/><rect x="15" y="5.5" width="1" height="7" fill="#6a6a70" opacity="0.45"/><rect x="3" y="12.2" width="13" height="1" fill="#6a6a70" opacity="0.45"/></g><g transform="translate(98,307)"><path d="M0.6 3 L1.6 0.6 H6 L7.5 2.6 H12.4 L13 4 V11.4 H0.6 Z" fill="#fff3a0" stroke="#c8922a" stroke-width="1.1"/><path d="M1.6 1.6 H5.6 M1.6 2.2 V10" stroke="#ffffff" stroke-width="0.8" opacity="0.8"/><rect x="2.5" y="4.5" width="12" height="7.2" fill="url(#fg)" stroke="#c8922a" stroke-width="1.1"/><path d="M3.4 5.5 H13.6" stroke="#fffde0" stroke-width="0.9"/><rect x="15" y="5.5" width="1" height="7" fill="#6a6a70" opacity="0.45"/><rect x="3" y="12.2" width="13" height="1" fill="#6a6a70" opacity="0.45"/></g><g transform="translate(98,323)"><path d="M0.6 3 L1.6 0.6 H6 L7.5 2.6 H12.4 L13 4 V11.4 H0.6 Z" fill="#fff3a0" stroke="#c8922a" stroke-width="1.1"/><path d="M1.6 1.6 H5.6 M1.6 2.2 V10" stroke="#ffffff" stroke-width="0.8" opacity="0.8"/><rect x="2.5" y="4.5" width="12" height="7.2" fill="url(#fg)" stroke="#c8922a" stroke-width="1.1"/><path d="M3.4 5.5 H13.6" stroke="#fffde0" stroke-width="0.9"/><rect x="15" y="5.5" width="1" height="7" fill="#6a6a70" opacity="0.45"/><rect x="3" y="12.2" width="13" height="1" fill="#6a6a70" opacity="0.45"/></g><g transform="translate(98,339)"><path d="M0.6 3 L1.6 0.6 H6 L7.5 2.6 H12.4 L13 4 V11.4 H0.6 Z" fill="#fff3a0" stroke="#c8922a" stroke-width="1.1"/><path d="M1.6 1.6 H5.6 M1.6 2.2 V10" stroke="#ffffff" stroke-width="0.8" opacity="0.8"/><rect x="2.5" y="4.5" width="12" height="7.2" fill="url(#fg)" stroke="#c8922a" stroke-width="1.1"/><path d="M3.4 5.5 H13.6" stroke="#fffde0" stroke-width="0.9"/><rect x="15" y="5.5" width="1" height="7" fill="#6a6a70" opacity="0.45"/><rect x="3" y="12.2" width="13" height="1" fill="#6a6a70" opacity="0.45"/></g><g transform="translate(98,355)"><path d="M0.6 3 L1.6 0.6 H6 L7.5 2.6 H12.4 L13 4 V11.4 H0.6 Z" fill="#fff3a0" stroke="#c8922a" stroke-width="1.1"/><path d="M1.6 1.6 H5.6 M1.6 2.2 V10" stroke="#ffffff" stroke-width="0.8" opacity="0.8"/><rect x="2.5" y="4.5" width="12" height="7.2" fill="url(#fg)" stroke="#c8922a" stroke-width="1.1"/><path d="M3.4 5.5 H13.6" stroke="#fffde0" stroke-width="0.9"/><rect x="15" y="5.5" width="1" height="7" fill="#6a6a70" opacity="0.45"/><rect x="3" y="12.2" width="13" height="1" fill="#6a6a70" opacity="0.45"/></g><g transform="translate(98,371)"><path d="M0.6 3 L1.6 0.6 H6 L7.5 2.6 H12.4 L13 4 V11.4 H0.6 Z" fill="#fff3a0" stroke="#c8922a" stroke-width="1.1"/><path d="M1.6 1.6 H5.6 M1.6 2.2 V10" stroke="#ffffff" stroke-width="0.8" opacity="0.8"/><rect x="2.5" y="4.5" width="12" height="7.2" fill="url(#fg)" stroke="#c8922a" stroke-width="1.1"/><path d="M3.4 5.5 H13.6" stroke="#fffde0" stroke-width="0.9"/><rect x="15" y="5.5" width="1" height="7" fill="#6a6a70" opacity="0.45"/><rect x="3" y="12.2" width="13" height="1" fill="#6a6a70" opacity="0.45"/></g><g transform="translate(117,387)"><path d="M0.6 3 L1.6 0.6 H6 L7.5 2.6 H12.4 L13 4 V11.4 H0.6 Z" fill="#fff3a0" stroke="#c8922a" stroke-width="1.1"/><path d="M1.6 1.6 H5.6 M1.6 2.2 V10" stroke="#ffffff" stroke-width="0.8" opacity="0.8"/><rect x="2.5" y="4.5" width="12" height="7.2" fill="url(#fg)" stroke="#c8922a" stroke-width="1.1"/><path d="M3.4 5.5 H13.6" stroke="#fffde0" stroke-width="0.9"/><rect x="15" y="5.5" width="1" height="7" fill="#6a6a70" opacity="0.45"/><rect x="3" y="12.2" width="13" height="1" fill="#6a6a70" opacity="0.45"/></g><g transform="translate(98,403)"><path d="M0.6 3 L1.6 0.6 H6 L7.5 2.6 H12.4 L13 4 V11.4 H0.6 Z" fill="#fff3a0" stroke="#c8922a" stroke-width="1.1"/><path d="M1.6 1.6 H5.6 M1.6 2.2 V10" stroke="#ffffff" stroke-width="0.8" opacity="0.8"/><rect x="2.5" y="4.5" width="12" height="7.2" fill="url(#fg)" stroke="#c8922a" stroke-width="1.1"/><path d="M3.4 5.5 H13.6" stroke="#fffde0" stroke-width="0.9"/><rect x="15" y="5.5" width="1" height="7" fill="#6a6a70" opacity="0.45"/><rect x="3" y="12.2" width="13" height="1" fill="#6a6a70" opacity="0.45"/></g><g transform="translate(98,419)"><path d="M0.6 3 L1.6 0.6 H6 L7.5 2.6 H12.4 L13 4 V11.4 H0.6 Z" fill="#fff3a0" stroke="#c8922a" stroke-width="1.1"/><path d="M1.6 1.6 H5.6 M1.6 2.2 V10" stroke="#ffffff" stroke-width="0.8" opacity="0.8"/><rect x="2.5" y="4.5" width="12" height="7.2" fill="url(#fg)" stroke="#c8922a" stroke-width="1.1"/><path d="M3.4 5.5 H13.6" stroke="#fffde0" stroke-width="0.9"/><rect x="15" y="5.5" width="1" height="7" fill="#6a6a70" opacity="0.45"/><rect x="3" y="12.2" width="13" height="1" fill="#6a6a70" opacity="0.45"/></g><g transform="translate(98,435)"><path d="M0.6 3 L1.6 0.6 H6 L7.5 2.6 H12.4 L13 4 V11.4 H0.6 Z" fill="#fff3a0" stroke="#c8922a" stroke-width="1.1"/><path d="M1.6 1.6 H5.6 M1.6 2.2 V10" stroke="#ffffff" stroke-width="0.8" opacity="0.8"/><rect x="2.5" y="4.5" width="12" height="7.2" fill="url(#fg)" stroke="#c8922a" stroke-width="1.1"/><path d="M3.4 5.5 H13.6" stroke="#fffde0" stroke-width="0.9"/><rect x="15" y="5.5" width="1" height="7" fill="#6a6a70" opacity="0.45"/><rect x="3" y="12.2" width="13" height="1" fill="#6a6a70" opacity="0.45"/></g><g transform="translate(98,451)"><path d="M0.6 3 L1.6 0.6 H6 L7.5 2.6 H12.4 L13 4 V11.4 H0.6 Z" fill="#fff3a0" stroke="#c8922a" stroke-width="1.1"/><path d="M1.6 1.6 H5.6 M1.6 2.2 V10" stroke="#ffffff" stroke-width="0.8" opacity="0.8"/><rect x="2.5" y="4.5" width="12" height="7.2" fill="url(#fg)" stroke="#c8922a" stroke-width="1.1"/><path d="M3.4 5.5 H13.6" stroke="#fffde0" stroke-width="0.9"/><rect x="15" y="5.5" width="1" height="7" fill="#6a6a70" opacity="0.45"/><rect x="3" y="12.2" width="13" height="1" fill="#6a6a70" opacity="0.45"/></g><g transform="translate(98,467)"><path d="M0.6 3 L1.6 0.6 H6 L7.5 2.6 H12.4 L13 4 V11.4 H0.6 Z" fill="#fff3a0" stroke="#c8922a" stroke-width="1.1"/><path d="M1.6 1.6 H5.6 M1.6 2.2 V10" stroke="#ffffff" stroke-width="0.8" opacity="0.8"/><rect x="2.5" y="4.5" width="12" height="7.2" fill="url(#fg)" stroke="#c8922a" stroke-width="1.1"/><path d="M3.4 5.5 H13.6" stroke="#fffde0" stroke-width="0.9"/><rect x="15" y="5.5" width="1" height="7" fill="#6a6a70" opacity="0.45"/><rect x="3" y="12.2" width="13" height="1" fill="#6a6a70" opacity="0.45"/></g><g transform="translate(98,483)"><path d="M0.6 3 L1.6 0.6 H6 L7.5 2.6 H12.4 L13 4 V11.4 H0.6 Z" fill="#fff3a0" stroke="#c8922a" stroke-width="1.1"/><path d="M1.6 1.6 H5.6 M1.6 2.2 V10" stroke="#ffffff" stroke-width="0.8" opacity="0.8"/><rect x="2.5" y="4.5" width="12" height="7.2" fill="url(#fg)" stroke="#c8922a" stroke-width="1.1"/><path d="M3.4 5.5 H13.6" stroke="#fffde0" stroke-width="0.9"/><rect x="15" y="5.5" width="1" height="7" fill="#6a6a70" opacity="0.45"/><rect x="3" y="12.2" width="13" height="1" fill="#6a6a70" opacity="0.45"/></g></svg></div>
<div class="t" style="left:43.00px;top:97.84px;font-size:12px;line-height:16px;color:#000;transform:scaleX(0.9024);transform-origin:0 0;">Webserver.E01</div>
<div class="t" style="left:62.00px;top:113.84px;font-size:12px;line-height:16px;color:#000;transform:scaleX(0.9300);transform-origin:0 0;">/dev/sda1 [243MB]</div>
<div class="t" style="left:62.00px;top:129.84px;font-size:12px;line-height:16px;color:#000;transform:scaleX(0.8902);transform-origin:0 0;">VulnOSv2-vg-swap_1 [768MB]</div>
<div class="t" style="left:62.00px;top:145.84px;font-size:12px;line-height:16px;color:#000;transform:scaleX(0.8910);transform-origin:0 0;">VulnOSv2-vg-root [31244MB]</div>
<div class="t" style="left:81.00px;top:161.84px;font-size:12px;line-height:16px;color:#000;transform:scaleX(0.8941);transform-origin:0 0;">NONAME [ext4]</div>
<div class="t" style="left:100.20px;top:177.84px;font-size:12px;line-height:16px;color:#000;transform:scaleX(0.8593);transform-origin:0 0;">[root]</div>
<div class="t" style="left:118.70px;top:193.84px;font-size:12px;line-height:16px;color:#000;transform:scaleX(0.8800);transform-origin:0 0;">bin</div>
<div class="t" style="left:118.70px;top:209.84px;font-size:12px;line-height:16px;color:#000;transform:scaleX(0.8800);transform-origin:0 0;">boot</div>
<div class="t" style="left:118.70px;top:225.84px;font-size:12px;line-height:16px;color:#000;transform:scaleX(0.8800);transform-origin:0 0;">dev</div>
<div class="t" style="left:118.70px;top:241.84px;font-size:12px;line-height:16px;color:#000;transform:scaleX(0.8800);transform-origin:0 0;">etc</div>
<div class="t" style="left:118.70px;top:257.84px;font-size:12px;line-height:16px;color:#000;transform:scaleX(0.8800);transform-origin:0 0;">home</div>
<div class="t" style="left:118.70px;top:273.84px;font-size:12px;line-height:16px;color:#000;transform:scaleX(0.8800);transform-origin:0 0;">lib</div>
<div class="t" style="left:118.70px;top:289.84px;font-size:12px;line-height:16px;color:#000;transform:scaleX(0.8800);transform-origin:0 0;">lost+found</div>
<div class="t" style="left:118.70px;top:305.84px;font-size:12px;line-height:16px;color:#000;transform:scaleX(0.8800);transform-origin:0 0;">media</div>
<div class="t" style="left:118.70px;top:321.84px;font-size:12px;line-height:16px;color:#000;transform:scaleX(0.8800);transform-origin:0 0;">mnt</div>
<div class="t" style="left:118.70px;top:337.84px;font-size:12px;line-height:16px;color:#000;transform:scaleX(0.8800);transform-origin:0 0;">opt</div>
<div class="t" style="left:118.70px;top:353.84px;font-size:12px;line-height:16px;color:#000;transform:scaleX(0.8800);transform-origin:0 0;">proc</div>
<div class="a" style="left:117px;top:370px;width:23px;height:16px;background:#f0f0f0"></div>
<div class="t" style="left:118.70px;top:369.84px;font-size:12px;line-height:16px;color:#000;transform:scaleX(0.8800);transform-origin:0 0;">root</div>
<div class="t" style="left:138.50px;top:385.84px;font-size:12px;line-height:16px;color:#000;transform:scaleX(0.8800);transform-origin:0 0;">.cache</div>
<div class="t" style="left:118.70px;top:401.84px;font-size:12px;line-height:16px;color:#000;transform:scaleX(0.8800);transform-origin:0 0;">run</div>
<div class="t" style="left:118.70px;top:417.84px;font-size:12px;line-height:16px;color:#000;transform:scaleX(0.8800);transform-origin:0 0;">sbin</div>
<div class="t" style="left:118.70px;top:433.84px;font-size:12px;line-height:16px;color:#000;transform:scaleX(0.8800);transform-origin:0 0;">srv</div>
<div class="t" style="left:118.70px;top:449.84px;font-size:12px;line-height:16px;color:#000;transform:scaleX(0.8800);transform-origin:0 0;">sys</div>
<div class="t" style="left:118.70px;top:465.84px;font-size:12px;line-height:16px;color:#000;transform:scaleX(0.8800);transform-origin:0 0;">tmp</div>
<div class="t" style="left:118.70px;top:481.84px;font-size:12px;line-height:16px;color:#000;transform:scaleX(0.8800);transform-origin:0 0;">usr</div>
<div class="a" style="left:280px;top:97px;width:15px;height:398px;background:#f0f0f0"></div>
<div class="a" style="left:280px;top:115px;width:15px;height:223px;background:#cdcdcd"></div>
<svg style="left:284px;top:104px" width="8" height="7" viewBox="0 0 8 7"><path d="M0.8 5.5 L3.5 2 L6.2 5.5" fill="none" stroke="#606060" stroke-width="1.8"/></svg>
<svg style="left:284px;top:483px" width="8" height="7" viewBox="0 0 8 7"><path d="M0.8 1.5 L3.5 5 L6.2 1.5" fill="none" stroke="#606060" stroke-width="1.8"/></svg>
<div class="a" style="left:0px;top:500px;width:296px;height:23px;border:1px solid #a0a0a0;border-radius:2px;background:#f0f0f0"></div>
<div class="t" style="left:2.00px;top:501.77px;font-size:12.2px;line-height:16px;color:#000;transform:scaleX(0.9706);transform-origin:0 0;">Custom Content Sources</div>
<svg style="left:281px;top:508px" width="8" height="8" viewBox="0 0 8 8"><path d="M0.3 0.3 L7.2 7.2 M7.2 0.3 L0.3 7.2" stroke="#505050" stroke-width="0.9"/></svg>
<div class="a" style="left:0px;top:524px;width:294px;height:342px;border:1px solid #828790;background:#fff"></div>
<div class="t" style="left:7.00px;top:529.98px;font-size:11.6px;line-height:16px;color:#000;transform:scaleX(0.9130);transform-origin:0 0;">Evidence:File System|Path|File</div>
<div class="a" style="left:226px;top:527px;width:1px;height:24px;background:#e5e5e5"></div>
<div class="t" style="left:232.70px;top:529.98px;font-size:11.6px;line-height:16px;color:#000;transform:scaleX(0.9175);transform-origin:0 0;">Options</div>
<div class="a" style="left:1px;top:848px;width:292px;height:16px;background:#f0f0f0"></div>
<div class="a" style="left:19px;top:848px;width:165px;height:16px;background:#cdcdcd"></div>
<svg style="left:7px;top:852px" width="7" height="8" viewBox="0 0 7 8"><path d="M5 0.8 L1.5 4 L5 7.2" fill="none" stroke="#606060" stroke-width="1.8"/></svg>
<svg style="left:280px;top:852px" width="7" height="8" viewBox="0 0 7 8"><path d="M1.5 0.8 L5 4 L1.5 7.2" fill="none" stroke="#606060" stroke-width="1.8"/></svg>
<div class="a" style="left:4px;top:870px;width:27px;height:21px;background:#e1e1e1;border:1px solid #adadad"></div>
<div class="t" style="left:6.70px;top:873.12px;font-size:11.2px;line-height:16px;color:#000;transform:scaleX(0.9364);transform-origin:0 0;">New</div>
<div class="a" style="left:36px;top:870px;width:31px;height:21px;background:#cccccc;border:1px solid #bfbfbf"></div>
<div class="t" style="left:41.10px;top:873.12px;font-size:11.2px;line-height:16px;color:#838383;transform:scaleX(0.9947);transform-origin:0 0;">Edit</div>
<div class="a" style="left:72px;top:870px;width:45px;height:21px;background:#cccccc;border:1px solid #bfbfbf"></div>
<div class="t" style="left:74.30px;top:873.12px;font-size:11.2px;line-height:16px;color:#838383;transform:scaleX(0.9214);transform-origin:0 0;">Remove</div>
<div class="a" style="left:123px;top:870px;width:58px;height:21px;background:#cccccc;border:1px solid #bfbfbf"></div>
<div class="t" style="left:126.00px;top:873.12px;font-size:11.2px;line-height:16px;color:#838383;transform:scaleX(0.9123);transform-origin:0 0;">Remove All</div>
<div class="a" style="left:186px;top:870px;width:72px;height:21px;background:#cccccc;border:1px solid #bfbfbf"></div>
<div class="t" style="left:189.00px;top:873.12px;font-size:11.2px;line-height:16px;color:#838383;transform:scaleX(0.9559);transform-origin:0 0;">Create Image</div>
<div class="a" style="left:0px;top:899px;width:195px;height:18px;background:#fff;border-top:1px solid #a0a0a0"></div>
<div class="a" style="left:99px;top:902px;width:1px;height:15px;background:#a0a0a0"></div>
<div class="t" style="left:25.00px;top:901.84px;font-size:12px;line-height:16px;color:#8a8a8a;transform:scaleX(0.9636);transform-origin:0 0;">Properties</div>
<div class="t" style="left:104.00px;top:901.84px;font-size:12px;line-height:16px;color:#8a8a8a;transform:scaleX(0.9560);transform-origin:0 0;">Hex Value Inter...</div>
<div class="t" style="left:201.00px;top:901.84px;font-size:12px;line-height:16px;color:#000;transform:scaleX(0.9885);transform-origin:0 0;">Custom Conte...</div>
<div class="a" style="left:291px;top:899px;width:5px;height:18px;background:#fff;border-top:1px solid #a0a0a0;border-left:1px solid #a0a0a0"></div>
<div class="a" style="left:300px;top:73px;width:1162px;height:24px;background:#0078d7"></div>
<div class="t" style="left:302.80px;top:76.67px;font-size:12.5px;line-height:16px;color:#fff;transform:scaleX(0.8659);transform-origin:0 0;">File List</div>
<div class="a" style="left:300px;top:97px;width:1162px;height:272px;background:#fff"></div>
<div class="t" style="left:306.30px;top:101.67px;font-size:12.5px;line-height:16px;color:#000;transform:scaleX(0.9636);transform-origin:0 0;">Name</div>
<div class="t" style="left:624.30px;top:101.67px;font-size:12.5px;line-height:16px;color:#000;transform:scaleX(0.8208);transform-origin:0 0;">Size</div>
<div class="t" style="left:656.40px;top:101.67px;font-size:12.5px;line-height:16px;color:#000;transform:scaleX(0.9100);transform-origin:0 0;">Type</div>
<div class="t" style="left:756.50px;top:101.67px;font-size:12.5px;line-height:16px;color:#000;transform:scaleX(0.9636);transform-origin:0 0;">Date Modified</div>
<div class="a" style="left:549px;top:98px;width:1px;height:24px;background:#e5e5e5"></div>
<div class="a" style="left:649px;top:98px;width:1px;height:24px;background:#e5e5e5"></div>
<div class="a" style="left:749px;top:98px;width:1px;height:24px;background:#e5e5e5"></div>
<div class="a" style="left:899px;top:98px;width:1px;height:24px;background:#e5e5e5"></div>
<div class="t" style="left:322.50px;top:123.67px;font-size:12.5px;line-height:16px;color:#000;transform:scaleX(0.9150);transform-origin:0 0;">.cache</div>
<div class="t" style="left:637.70px;top:123.67px;font-size:12.5px;line-height:16px;color:#000;transform:scaleX(0.9000);transform-origin:0 0;">4</div>
<div class="t" style="left:656.60px;top:123.67px;font-size:12.5px;line-height:16px;color:#000;transform:scaleX(0.9430);transform-origin:0 0;">Directory</div>
<div class="t" style="left:756.30px;top:123.67px;font-size:12.5px;line-height:16px;color:#000;transform:scaleX(0.8910);transform-origin:0 0;">02/05/2016 16:55:37</div>
<div class="t" style="left:322.50px;top:142.67px;font-size:12.5px;line-height:16px;color:#000;transform:scaleX(0.9150);transform-origin:0 0;">.bashrc</div>
<div class="t" style="left:637.70px;top:142.67px;font-size:12.5px;line-height:16px;color:#000;transform:scaleX(0.9000);transform-origin:0 0;">4</div>
<div class="t" style="left:656.60px;top:142.67px;font-size:12.5px;line-height:16px;color:#000;transform:scaleX(0.9010);transform-origin:0 0;">Regular File</div>
<div class="t" style="left:756.30px;top:142.67px;font-size:12.5px;line-height:16px;color:#000;transform:scaleX(0.8910);transform-origin:0 0;">20/02/2014 2:43:56</div>
<div class="a" style="left:320px;top:160px;width:580px;height:19px;background:#0078d7;outline:1px dotted #ff9a1a;outline-offset:-1px"></div>
<div class="t" style="left:322.50px;top:161.67px;font-size:12.5px;line-height:16px;color:#fff;transform:scaleX(0.9150);transform-origin:0 0;">.bash_history</div>
<div class="t" style="left:637.70px;top:161.67px;font-size:12.5px;line-height:16px;color:#fff;transform:scaleX(0.9000);transform-origin:0 0;">1</div>
<div class="t" style="left:656.60px;top:161.67px;font-size:12.5px;line-height:16px;color:#fff;transform:scaleX(0.9010);transform-origin:0 0;">Regular File</div>
<div class="t" style="left:756.30px;top:161.67px;font-size:12.5px;line-height:16px;color:#fff;transform:scaleX(0.8910);transform-origin:0 0;">05/10/2019 11:24:09</div>
<div class="t" style="left:322.50px;top:180.67px;font-size:12.5px;line-height:16px;color:#000;transform:scaleX(0.9150);transform-origin:0 0;">.profile</div>
<div class="t" style="left:637.70px;top:180.67px;font-size:12.5px;line-height:16px;color:#000;transform:scaleX(0.9000);transform-origin:0 0;">1</div>
<div class="t" style="left:656.60px;top:180.67px;font-size:12.5px;line-height:16px;color:#000;transform:scaleX(0.9010);transform-origin:0 0;">Regular File</div>
<div class="t" style="left:756.30px;top:180.67px;font-size:12.5px;line-height:16px;color:#000;transform:scaleX(0.8910);transform-origin:0 0;">20/02/2014 2:43:56</div>
<div class="t" style="left:322.50px;top:199.67px;font-size:12.5px;line-height:16px;color:#000;transform:scaleX(0.9150);transform-origin:0 0;">.psql_history</div>
<div class="t" style="left:637.70px;top:199.67px;font-size:12.5px;line-height:16px;color:#000;transform:scaleX(0.9000);transform-origin:0 0;">1</div>
<div class="t" style="left:656.60px;top:199.67px;font-size:12.5px;line-height:16px;color:#000;transform:scaleX(0.9010);transform-origin:0 0;">Regular File</div>
<div class="t" style="left:756.30px;top:199.67px;font-size:12.5px;line-height:16px;color:#000;transform:scaleX(0.8910);transform-origin:0 0;">02/05/2016 17:01:51</div>
<div class="t" style="left:322.50px;top:218.67px;font-size:12.5px;line-height:16px;color:#000;transform:scaleX(0.9150);transform-origin:0 0;">.viminfo</div>
<div class="t" style="left:637.70px;top:218.67px;font-size:12.5px;line-height:16px;color:#000;transform:scaleX(0.9000);transform-origin:0 0;">3</div>
<div class="t" style="left:656.60px;top:218.67px;font-size:12.5px;line-height:16px;color:#000;transform:scaleX(0.9010);transform-origin:0 0;">Regular File</div>
<div class="t" style="left:756.30px;top:218.67px;font-size:12.5px;line-height:16px;color:#000;transform:scaleX(0.8910);transform-origin:0 0;">05/10/2019 11:19:34</div>
<div class="t" style="left:322.50px;top:237.67px;font-size:12.5px;line-height:16px;color:#000;transform:scaleX(0.9150);transform-origin:0 0;">flag.txt</div>
<div class="t" style="left:637.70px;top:237.67px;font-size:12.5px;line-height:16px;color:#000;transform:scaleX(0.9000);transform-origin:0 0;">1</div>
<div class="t" style="left:656.60px;top:237.67px;font-size:12.5px;line-height:16px;color:#000;transform:scaleX(0.9010);transform-origin:0 0;">Regular File</div>
<div class="t" style="left:756.30px;top:237.67px;font-size:12.5px;line-height:16px;color:#000;transform:scaleX(0.8910);transform-origin:0 0;">04/05/2016 17:06:41</div>
<svg style="left:0;top:0" width="1462" height="300" viewBox="0 0 1462 300"><defs><pattern id="chk" width="2" height="2" patternUnits="userSpaceOnUse"><rect width="2" height="2" fill="#fff"/><rect width="1" height="1" fill="#0078d7"/><rect x="1" y="1" width="1" height="1" fill="#0078d7"/></pattern><linearGradient id="dg" x1="0" y1="0" x2="1" y2="1"><stop offset="0" stop-color="#ffe9a0"/><stop offset="1" stop-color="#f7d26a"/></linearGradient></defs><path d="M306.5 123.5 h12 v14 h-12 z" fill="url(#dg)" stroke="#e8c150" stroke-width="1"/><path d="M317.5 132.5 v5" stroke="#e8c150" stroke-width="1"/><path d="M306.5 143.5 h8.5 l2.5 2.5 v12 h-11 z" fill="#fff" stroke="#8a8a8a" stroke-width="1"/><path d="M315 143.5 v2.5 h2.5" fill="none" stroke="#b0b0b0" stroke-width="1"/><rect x="308" y="147" width="8" height="7" fill="#3b464e"/><rect x="309" y="148" width="3" height="1" fill="#8a9096"/><rect x="309" y="150" width="2" height="1" fill="#8a9096"/><path d="M306.5 162.5 h8.5 l2.5 2.5 v12 h-11 z" fill="#fff" stroke="#8a8a8a" stroke-width="1"/><path d="M315 162.5 v2.5 h2.5" fill="none" stroke="#b0b0b0" stroke-width="1"/><rect x="304" y="160" width="16" height="17" fill="url(#chk)"/><path d="M306.5 181.5 h8.5 l2.5 2.5 v12 h-11 z" fill="#fff" stroke="#8a8a8a" stroke-width="1"/><path d="M315 181.5 v2.5 h2.5" fill="none" stroke="#b0b0b0" stroke-width="1"/><rect x="308" y="185" width="8" height="7" fill="#3b464e"/><rect x="309" y="186" width="3" height="1" fill="#8a9096"/><rect x="309" y="188" width="2" height="1" fill="#8a9096"/><path d="M306.5 200.5 h8.5 l2.5 2.5 v12 h-11 z" fill="#fff" stroke="#8a8a8a" stroke-width="1"/><path d="M315 200.5 v2.5 h2.5" fill="none" stroke="#b0b0b0" stroke-width="1"/><path d="M306.5 219.5 h8.5 l2.5 2.5 v12 h-11 z" fill="#fff" stroke="#8a8a8a" stroke-width="1"/><path d="M315 219.5 v2.5 h2.5" fill="none" stroke="#b0b0b0" stroke-width="1"/><path d="M306.5 238.5 h8.5 l2.5 2.5 v12 h-11 z" fill="#fff" stroke="#8a8a8a" stroke-width="1"/><path d="M315 238.5 v2.5 h2.5" fill="none" stroke="#b0b0b0" stroke-width="1"/><rect x="308" y="241" width="8" height="1" fill="#777"/><rect x="308" y="243" width="8" height="1" fill="#777"/><rect x="308" y="245" width="8" height="1" fill="#777"/><rect x="308" y="247" width="8" height="1" fill="#777"/><rect x="308" y="249" width="8" height="1" fill="#777"/><rect x="308" y="251" width="8" height="1" fill="#777"/></svg>
<div class="a" style="left:300px;top:373px;width:1162px;height:544px;background:#fff"></div>
<div class="a" style="left:300px;top:373px;width:1162px;height:2px;background:#696969"></div>
<div class="a" style="left:300px;top:373px;width:2px;height:544px;background:#696969"></div>
<div class="a" style="left:302px;top:375px;width:1160px;height:1px;background:#a0a0a0"></div>
<div class="a" style="left:304px;top:376px;width:1158px;height:1px;background:#696969"></div>
<div class="a" style="left:304px;top:376px;width:2px;height:541px;background:#696969"></div>
<svg style="left:0;top:0" width="1462" height="917" viewBox="0 0 1462 917"><path d="M315 773 L316 770.5 L336 770.5 L345 772 L361 772.5 L373 773 L401 773 L401 789.5 L394 791 L382 792.5 L364 792 L350 791.5 L335 792 L322 793 L315 793 Z" fill="#ffff00"/></svg>
<div class="mono" style="left:316px;top:393.45px">poweroff
whoami
id
pwd
vim /etc/passwd
ll
vim flag.txt
cat .psql_history
cd /var/www/html/
ll
cd jabc
ll
cat .htaccess
ll
vim scripts/update.php
ls -lh scripts/
w
logout
vim /var/log/lastlog
logout
passwd php
logout
cd /tmp/
ll
rm 37292.c
cd
ls -lha
ls .cache/
cat .cache/motd.legal-displayed
logout</div>
</body></html>
